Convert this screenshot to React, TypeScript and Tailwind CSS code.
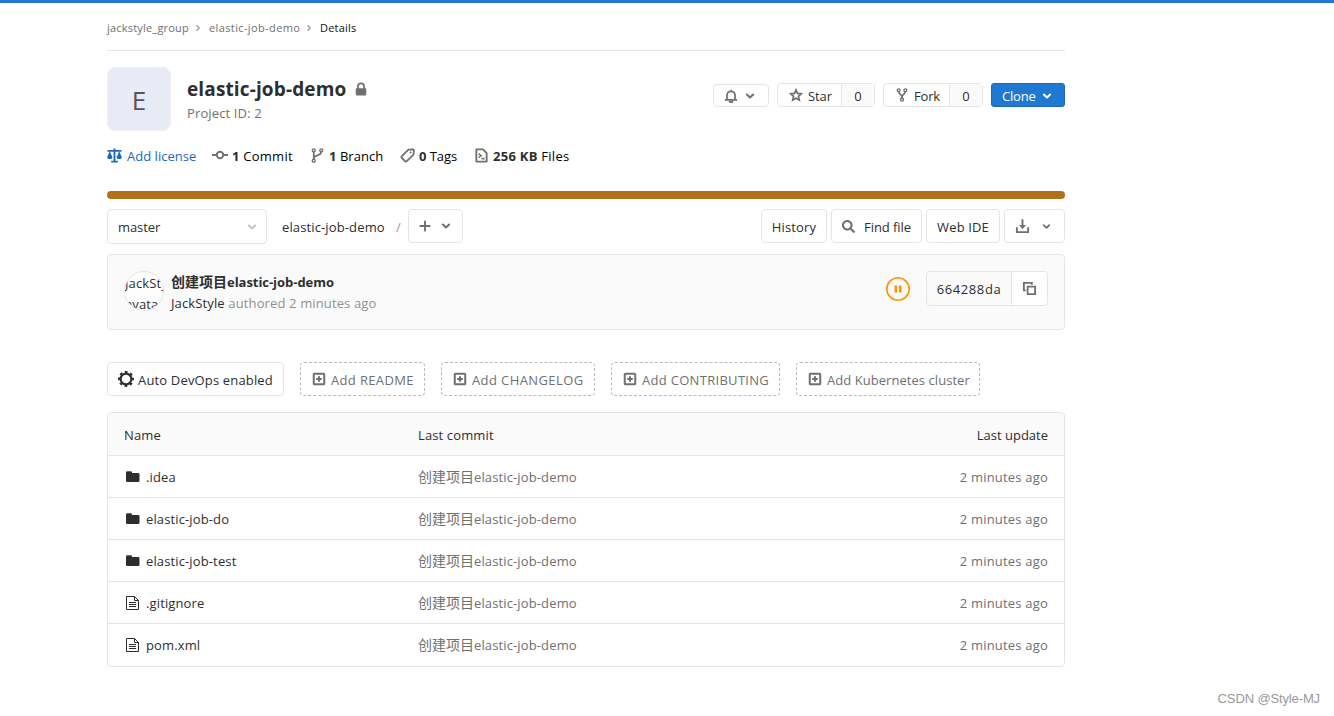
import React from "react";
import clsx from "clsx";
import { FaSearch } from "react-icons/fa";

type IconProps = { className?: string };

const Svg: React.FC<IconProps & { children: React.ReactNode }> = ({
  className,
  children,
}) => (
  <svg
    viewBox="0 0 16 16"
    fill="none"
    stroke="currentColor"
    strokeWidth={2}
    className={clsx("shrink-0", className)}
  >
    {children}
  </svg>
);

const ChevronDown: React.FC<IconProps> = ({ className }) => (
  <Svg className={className}>
    <path d="M3 5.5 8 10.5l5-5" strokeWidth={3.2} strokeLinecap="round" strokeLinejoin="round" />
  </Svg>
);

const ChevronRight: React.FC<IconProps> = ({ className }) => (
  <Svg className={className}>
    <path d="m5 2.5 5.5 5.5L5 13.5" strokeWidth={2.4} />
  </Svg>
);

const LockIcon: React.FC<IconProps> = ({ className }) => (
  <Svg className={className}>
    <path d="M4.5 8V5a3.5 3.5 0 0 1 7 0v3" />
    <path d="M3 7h10a1 1 0 0 1 1 1v6a1.5 1.5 0 0 1-1.5 1.5h-9A1.5 1.5 0 0 1 2 14V8a1 1 0 0 1 1-1z" fill="currentColor" stroke="none" />
  </Svg>
);

const BellIcon: React.FC<IconProps> = ({ className }) => (
  <Svg className={className}>
    <path d="M3.4 12V7.2a4.6 4.6 0 0 1 9.2 0V12M1 12.500h14" />
    <path d="M6 14h4a2 2 0 0 1-4 0zM8 .5v2" fill="currentColor" strokeWidth={1.2} />
  </Svg>
);

const StarIcon: React.FC<IconProps> = ({ className }) => (
  <Svg className={className}>
    <path d="m8 2.200 1.700 3.900 4.300.5-3.200 2.900.9 4.200L8 11.600l-3.700 2.100.9-4.200L2 6.600l4.300-.5z" />
  </Svg>
);

const ForkIcon: React.FC<IconProps> = ({ className }) => (
  <Svg className={className}>
    <circle cx="4.200" cy="2.600" r="1.700" strokeWidth={1.500} />
    <circle cx="11.800" cy="2.600" r="1.700" strokeWidth={1.500} />
    <circle cx="8" cy="13.400" r="1.700" strokeWidth={1.500} />
    <path d="M4.400 4.400c0 3.300 3.600 3 3.600 5.500v1.800M11.600 4.400c0 3.300-3.600 3-3.600 5.500" />
  </Svg>
);

const BranchIcon: React.FC<IconProps> = ({ className }) => (
  <Svg className={className}>
    <circle cx="4" cy="2.500" r="1.600" strokeWidth={1.500} />
    <circle cx="12" cy="2.500" r="1.600" strokeWidth={1.500} />
    <circle cx="4" cy="13.500" r="1.600" strokeWidth={1.500} />
    <path d="M4 4.300v7.400M12 4.300c0 4.400-7.600 2.600-8 6.700" strokeWidth={1.800} />
  </Svg>
);

const ScaleIcon: React.FC<IconProps> = ({ className }) => (
  <Svg className={className}>
    <path d="M8 .5v14M.5 3h15M4.500 14.500h7" />
    <path d="M3 4.500 1 9.500h4zM13 4.500l-2 5h4z" strokeWidth={1} fill="currentColor" />
    <path d="M.2 9h5.600a2.800 2.800 0 0 1-5.600 0zM10.200 9h5.600a2.800 2.800 0 0 1-5.600 0z" fill="currentColor" stroke="none" />
  </Svg>
);

const CommitIcon: React.FC<IconProps> = ({ className }) => (
  <Svg className={className}>
    <circle cx="8" cy="8" r="3.200" />
    <path d="M0 8h5M11 8h5" />
  </Svg>
);

const TagIcon: React.FC<IconProps> = ({ className }) => (
  <Svg className={className}>
    <path d="M9 1.800 14 1.600a.8.8 0 0 1 .8.8L14.400 7 7 14.200a1 1 0 0 1-1.400 0L1.800 10.400a1 1 0 0 1 0-1.400z" strokeWidth={1.900} strokeLinejoin="round" />
    <circle cx="11.300" cy="4.800" r="1.100" fill="currentColor" stroke="none" />
  </Svg>
);

const SnippetIcon: React.FC<IconProps> = ({ className }) => (
  <Svg className={className}>
    <path d="M2.500 1.500h7L13.500 5.500V14.500H2.500z" strokeLinejoin="round" />
    <path d="m5 6 2.500 2.200L5 10.400M8 11.300h3.200" strokeWidth={1.700} />
  </Svg>
);

const PlusIcon: React.FC<IconProps> = ({ className }) => (
  <Svg className={className}>
    <path d="M8 1.800v12.400M1.800 8h12.400" strokeWidth={2.500} strokeLinecap="round" />
  </Svg>
);

const DownloadIcon: React.FC<IconProps> = ({ className }) => (
  <Svg className={className}>
    <path d="M2 9.500v4.500h12V9.500M8 1v6" strokeLinecap="round" strokeLinejoin="round" />
    <path d="M4.300 6.500h7.400L8 10.800z" fill="currentColor" stroke="none" />
  </Svg>
);

const CopyIcon: React.FC<IconProps> = ({ className }) => (
  <Svg className={className}>
    <path d="M4 10H2V2h8.500v2M6 6h8v8H6z" />
  </Svg>
);

const GearIcon: React.FC<IconProps> = ({ className }) => (
  <Svg className={className}>
    <circle cx="8" cy="8" r="5.400" strokeWidth={2.200} />
    <circle cx="8" cy="8" r="6.900" strokeWidth={2.200} strokeDasharray="2.700 2.719" strokeDashoffset="1.350" />
  </Svg>
);

const AddIcon: React.FC<IconProps> = ({ className }) => (
  <Svg className={className}>
    <rect x="2" y="2" width="12" height="12" rx="1" strokeWidth={2.300} />
    <path d="M8 4.800v6.400M4.800 8h6.400" strokeWidth={2.300} />
  </Svg>
);

const FolderIcon: React.FC<IconProps> = ({ className }) => (
  <svg viewBox="0 0 14 12" fill="currentColor" className={clsx("shrink-0", className)}>
    <path d="M0 1.500A1.300 1.300 0 0 1 1.300.300h3.400A1.300 1.300 0 0 1 6 1.600v.4h6.200a1.300 1.300 0 0 1 1.300 1.300v6.400a1.300 1.300 0 0 1-1.300 1.300H1.300A1.300 1.300 0 0 1 0 9.700z" />
  </svg>
);

const FileIcon: React.FC<IconProps> = ({ className }) => (
  <svg viewBox="0 0 13 14" fill="none" stroke="currentColor" className={clsx("shrink-0", className)}>
    <path d="M.5.5h8l4 4v9H.5zM8.500.5v4h4M3 6.500h7M3 8.500h7M3 10.500h7" />
  </svg>
);

const files = [
  { name: ".idea", folder: true },
  { name: "elastic-job-do", folder: true },
  { name: "elastic-job-test", folder: true },
  { name: ".gitignore", folder: false },
  { name: "pom.xml", folder: false },
];

const suggestions = [
  { label: "Add README", style: "w-[125px] tracking-[0.35px]" },
  { label: "Add CHANGELOG", style: "w-[154px] tracking-[0.4px]" },
  { label: "Add CONTRIBUTING", style: "w-[169px] tracking-[0.3px]" },
  { label: "Add Kubernetes cluster", style: "w-[184px] tracking-[0.05px]" },
];

const button =
  "flex items-center whitespace-nowrap rounded-[4px] border border-[#e5e5e5] bg-white";

const CommitMessage = () => (
  <>
    <span className="text-[14px] tracking-normal">创建项目</span>elastic-job-demo
  </>
);

const App: React.FC = () => {
  return (
    <div className="h-[716px] overflow-hidden border-t-3 border-[#1f78d1] bg-white font-['Open_Sans','Noto_Sans_CJK_SC',sans-serif] text-[13px] leading-5 tracking-[0.13px] text-[#2e2e2e]">
      <div className="ml-[107px] w-[958px]">
        {/* Breadcrumbs */}
        <nav className="flex h-12 items-center border-b border-[#e5e5e5] pt-0.5 text-[11px] tracking-[0.2px] text-[#707070]">
          <span className="w-[82px] whitespace-nowrap">jackstyle_group</span>
          <ChevronRight className="mr-[7px] ml-[5px] size-2 text-[#999]" />
          <span className="w-[91px] whitespace-nowrap tracking-[0.38px]">elastic-job-demo</span>
          <ChevronRight className="mr-[7px] ml-[5px] size-2 text-[#999]" />
          <span className="text-[#111]">Details</span>
        </nav>

        {/* Project header */}
        <header className="mt-4 flex h-16">
          <div className="flex size-16 items-center justify-center rounded-lg border border-[#f0f0f5] bg-[#e8eaf6] pt-0.5 text-[26px] text-[#555]">
            E
          </div>
          <div className="ml-4 pt-2">
            <h1 className="flex h-7 items-center text-[19px] font-bold tracking-[0.13px]">
              elastic-job-demo
              <LockIcon className="ml-2 size-[14px] text-[#707070]" />
            </h1>
            <p className="text-[#707070]">Project ID: 2</p>
          </div>
          <div className="mt-4 ml-auto flex h-6 gap-2">
            <div className={clsx(button, "mt-px w-14 justify-between pr-[13px] pl-[10px] text-[#707070]")}>
              <BellIcon className="size-[14px]" />
              <ChevronDown className="size-[10px]" />
            </div>
            <div className={clsx(button, "w-[98px]")}>
              <StarIcon className="ml-[11px] size-[14px] text-[#707070]" />
              <span className="ml-[5px] pt-0.5 tracking-[-0.1px]">Star</span>
              <span className="ml-auto flex h-full w-[33px] items-center justify-center border-l border-[#e5e5e5] bg-[#fafafa] pt-0.5">0</span>
            </div>
            <div className={clsx(button, "w-[100px]")}>
              <ForkIcon className="ml-[11px] size-[14px] text-[#707070]" />
              <span className="ml-[5px] pt-0.5 tracking-[-0.2px]">Fork</span>
              <span className="ml-auto flex h-full w-[33px] items-center justify-center border-l border-[#e5e5e5] bg-[#fafafa] pt-0.5">0</span>
            </div>
            <div className="flex w-[74px] items-center rounded-[3px] border border-[#1b69b6] bg-[#1f78d1] pl-[10px] text-white">
              <span className="w-[32px] pt-0.5 tracking-[-0.2px]">Clone</span>
              <ChevronDown className="mt-0.5 ml-2 size-[10px]" />
            </div>
          </div>
        </header>

        {/* Project stats */}
        <div className="mt-[14px] flex h-5 items-center whitespace-nowrap text-black">
          <div className="flex w-[105px] items-center text-[#1b69b6]">
            <ScaleIcon className="mr-[5px] size-[15px]" />
            <span className="pt-0.5 tracking-[0.02px]">Add license</span>
          </div>
          <div className="flex w-[98px] items-center">
            <CommitIcon className="mr-1 size-4 text-[#707070]" />
            <span className="pt-0.5 tracking-[0.25px]"><b className="text-[#2e2e2e]">1</b> Commit</span>
          </div>
          <div className="flex w-[90px] items-center">
            <BranchIcon className="mr-1 size-[15px] text-[#707070]" />
            <span className="pt-0.5 tracking-[0.05px]"><b className="text-[#2e2e2e]">1</b> Branch</span>
          </div>
          <div className="flex w-[74px] items-center">
            <TagIcon className="mr-1 size-[15px] text-[#707070]" />
            <span className="pt-0.5 tracking-[-0.05px]"><b className="text-[#2e2e2e]">0</b> Tags</span>
          </div>
          <div className="flex items-center">
            <SnippetIcon className="mr-1 size-[15px] text-[#707070]" />
            <span className="pt-0.5 tracking-[0.27px]"><b className="text-[#2e2e2e]">256 KB</b> Files</span>
          </div>
        </div>

        <div className="mt-[26px] h-2 rounded-full bg-[#b07219]" />

        {/* Tree controls */}
        <div className="mt-[10px] flex h-[35px] items-start">
          <div className={clsx(button, "h-[35px] w-40 justify-between pr-[9px] pl-[10px]")}>
            <span className="tracking-[-0.1px]">master</span>
            <ChevronDown className="size-[10px] text-[#c4c4c4]" />
          </div>
          <span className="ml-[15px] w-[114px] pt-2">elastic-job-demo</span>
          <span className="w-[12px] pt-2 text-[#999]">/</span>
          <div className={clsx(button, "h-[34px] w-[55px] px-[10px] text-[#707070]")}>
            <PlusIcon className="size-3" />
            <ChevronDown className="ml-[10px] size-[10px]" />
          </div>
          <div className="ml-auto flex gap-1">
            <div className={clsx(button, "h-[34px] w-[66px] justify-center pt-0.5")}>History</div>
            <div className={clsx(button, "h-[34px] w-[91px] pl-[10px]")}>
              <FaSearch className="mr-[9px] size-[13px] text-[#707070]" />
              <span className="pt-0.5 tracking-[-0.05px]">Find file</span>
            </div>
            <div className={clsx(button, "h-[34px] w-[74px] justify-center pt-0.5")}>Web IDE</div>
            <div className={clsx(button, "h-[34px] w-[61px] pl-[10px] text-[#707070]")}>
              <DownloadIcon className="size-[15px]" />
              <ChevronDown className="ml-3 size-[9px]" />
            </div>
          </div>
        </div>

        {/* Latest commit */}
        <div className="mt-[10px] flex h-[76px] rounded-[4px] border border-[#e5e5e5] bg-[#fafafa] px-4 pt-4">
          <div className="mr-[7px] size-10 shrink-0 overflow-hidden rounded-full border border-[#e5e5e5] bg-[#fdfdfd] pt-px leading-[21px]">
            JackStyle's avatar
          </div>
          <div className="leading-[21px]">
            <p className="font-bold tracking-[-0.04px]"><CommitMessage /></p>
            <p className="text-[#919191]">
              <span className="text-[#2e2e2e]">JackStyle</span> authored 2 minutes ago
            </p>
          </div>
          <svg viewBox="0 0 24 24" fill="none" stroke="#fc9403" className="mt-[6px] mr-4 ml-auto size-6">
            <circle cx="12" cy="12" r="11.200" strokeWidth={1.600} />
            <path d="M9.800 8.500v7M14.200 8.500v7" strokeWidth={2.600} />
          </svg>
          <div className="flex h-[35px] w-[122px] overflow-hidden rounded-[4px] border border-[#e5e5e5]">
            <span className="flex w-[84px] items-center justify-center tracking-[0.6px]">664288da</span>
            <span className="flex flex-1 items-center justify-center border-l border-[#e5e5e5] bg-white text-[#707070]">
              <CopyIcon className="size-[15px]" />
            </span>
          </div>
        </div>

        {/* Suggested files */}
        <div className="mt-8 flex h-[34px] gap-4">
          <div className={clsx(button, "w-[177px] pl-[10px]")}>
            <GearIcon className="mr-1 size-4" />
            <span className="pt-0.5 tracking-[0.16px]">Auto DevOps enabled</span>
          </div>
          {suggestions.map((item) => (
            <div
              key={item.label}
              className={clsx(
                "flex items-center whitespace-nowrap rounded-[4px] border border-dashed border-[#bababa] pl-[11px] text-[#707070]",
                item.style
              )}
            >
              <AddIcon className="mr-[5px] size-[14px]" />
              <span className="pt-0.5">{item.label}</span>
            </div>
          ))}
        </div>

        {/* File tree */}
        <div className="mt-4 rounded-[4px] border border-[#e5e5e5] pb-px">
          <div className="grid h-[42px] grid-cols-[294px_1fr_auto] items-center rounded-t-[3px] bg-[#fafafa] px-4 pt-0.5">
            <span>Name</span>
            <span>Last commit</span>
            <span className="tracking-normal">Last update</span>
          </div>
          {files.map((file) => (
            <div
              key={file.name}
              className="grid h-[42px] grid-cols-[294px_1fr_auto] items-center border-t border-[#e5e5e5] px-4 text-[#707070]"
            >
              <span className="flex items-center pl-0.5 text-[#2e2e2e]">
                {file.folder ? (
                  <FolderIcon className="mr-[6px] h-3 w-[14px]" />
                ) : (
                  <FileIcon className="mr-[7px] h-[14px] w-[13px]" />
                )}
                <span>{file.name}</span>
              </span>
              <span><CommitMessage /></span>
              <span className="tracking-[0.2px]">2 minutes ago</span>
            </div>
          ))}
        </div>
        <footer className="mt-[22px] -mr-[255px] text-right font-['Liberation_Sans',sans-serif] text-[13px] tracking-[-0.13px] text-[#999]">
          CSDN @Style-MJ
        </footer>
      </div>
    </div>
  );
};

export default App;
